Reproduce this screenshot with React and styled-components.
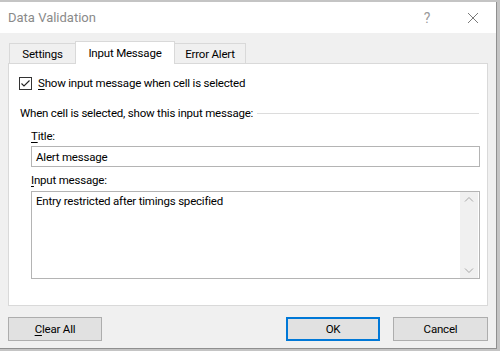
import React from 'react';
import styled, { createGlobalStyle } from 'styled-components';

const GlobalStyle = createGlobalStyle`
  html, body {
    margin: 0;
    padding: 0;
    background: #bdbdbd;
  }
  body {
    font-family: Roboto, "Noto Sans", sans-serif;
    font-size: 11.5px;
    letter-spacing: -0.2px;
    color: #000;
  }
`;

const Screen = styled.div`
  width: 500px;
  height: 351px;
  padding-top: 2px;
  box-sizing: border-box;
  overflow: hidden;
  background: #c4c4c4;
`;

const Dialog = styled.div`
  width: 497px;
  height: 347px;
  box-sizing: border-box;
  display: flex;
  flex-direction: column;
  background: #f0f0f0;
  border-right: 1px solid #8f8f8f;
  border-bottom: 1px solid #8f8f8f;
`;

const TitleBar = styled.div`
  height: 31px;
  flex: none;
  display: flex;
  align-items: center;
  padding-left: 8px;
  background: #fff;
  color: #8a8a8a;
  font-size: 13px;
  letter-spacing: 0;
`;

const TitleText = styled.div`
  flex: 1;
`;

const TitleButton = styled.div`
  width: 46px;
  height: 31px;
  display: flex;
  align-items: center;
  justify-content: center;
  color: #9a9a9a;
  font-size: 14px;
`;

const Body = styled.div`
  padding: 8px 8px 0 8px;
  display: flex;
  flex-direction: column;
`;

const Tabs = styled.div`
  display: flex;
  align-items: flex-end;
  height: 22px;
  padding-left: 1px;
`;

const Tab = styled.div`
  width: ${p => p.$w}px;
  box-sizing: border-box;
  height: ${p => (p.$active ? 23 : 20)}px;
  margin-bottom: ${p => (p.$active ? -1 : 0)}px;
  margin-left: ${p => (p.$active ? -1 : 0)}px;
  margin-right: ${p => (p.$active ? -1 : 0)}px;
  position: relative;
  z-index: ${p => (p.$active ? 2 : 1)};
  display: flex;
  align-items: ${p => (p.$active ? 'flex-start' : 'center')};
  padding-top: ${p => (p.$active ? 3 : 0)}px;
  justify-content: center;
  background: ${p => (p.$active ? '#fff' : '#f0f0f0')};
  border: 1px solid #d9d9d9;
  border-bottom: none;
  line-height: 16px;
`;

const Panel = styled.div`
  height: 243px;
  box-sizing: border-box;
  background: #fff;
  border: 1px solid #d9d9d9;
  padding: 11px 7px 0 10px;
  display: flex;
  flex-direction: column;
`;

const CheckRow = styled.label`
  display: flex;
  align-items: center;
  gap: 6px;
  height: 16px;
  line-height: 16px;
`;

const CheckBox = styled.span`
  width: 13px;
  height: 13px;
  box-sizing: border-box;
  border: 1px solid #333;
  background: #fff;
  display: flex;
  align-items: center;
  justify-content: center;
`;

const Key = styled.span`
  text-decoration: underline;
  text-underline-offset: 2px;
`;

const GroupHead = styled.div`
  margin-top: 14px;
  display: flex;
  align-items: center;
  gap: 4px;
  padding-left: 1px;
  line-height: 16px;

  &::after {
    content: '';
    flex: 1;
    height: 1px;
    background: #dcdcdc;
    margin-right: 1px;
  }
`;

const Fields = styled.div`
  padding-left: 12px;
  display: flex;
  flex-direction: column;
`;

const FieldLabel = styled.div`
  line-height: 16px;
  margin-top: ${p => p.$mt}px;
`;

const TextBox = styled.div`
  margin-top: 2px;
  height: 21px;
  box-sizing: border-box;
  border: 1px solid #b4b4b4;
  padding: 0 4px;
  display: flex;
  align-items: center;
  line-height: 16px;
`;

const MessageBox = styled.div`
  margin-top: 3px;
  height: 88px;
  box-sizing: border-box;
  border: 1px solid #b4b4b4;
  display: flex;
`;

const MessageText = styled.div`
  flex: 1;
  padding: 0 4px;
  line-height: 16px;
  padding-top: 1px;
`;

const ScrollBar = styled.div`
  width: 18px;
  margin: 0 1px 0 0;
  background: #f0f0f0;
  display: flex;
  flex-direction: column;
  justify-content: space-between;
  align-items: center;
  padding: 4px 0;
`;

const Footer = styled.div`
  margin-top: 11px;
  display: flex;
  align-items: center;
`;

const Button = styled.div`
  width: ${p => p.$w}px;
  height: 24px;
  box-sizing: border-box;
  display: flex;
  align-items: center;
  justify-content: center;
  background: #e1e1e1;
  border: 1px solid ${p => (p.$primary ? '#0078d7' : '#adadad')};
  box-shadow: ${p => (p.$primary ? 'inset 0 0 0 1px #0078d7' : 'none')};
  margin-left: ${p => p.$ml || 0}px;
  line-height: 16px;
`;

const Spacer = styled.div`
  flex: 1;
`;

const Chevron = ({ up }) => (
  <svg width="10" height="6" viewBox="0 0 10 6">
    <path
      d={up ? 'M1 5.5 L5 1.5 L9 5.5' : 'M1 0.5 L5 4.5 L9 0.5'}
      fill="none"
      stroke="#a6a6a6"
      strokeWidth="1"
    />
  </svg>
);

export default function App() {
  return (
    <Screen>
      <GlobalStyle />
      <Dialog>
        <TitleBar>
          <TitleText>Data Validation</TitleText>
          <TitleButton>?</TitleButton>
          <TitleButton>
            <svg width="12" height="12" viewBox="0 0 12 12">
              <path d="M1 1 L11 11 M11 1 L1 11" stroke="#7a7a7a" strokeWidth="1" />
            </svg>
          </TitleButton>
        </TitleBar>
        <Body>
          <Tabs>
            <Tab $w={67}>Settings</Tab>
            <Tab $w={100} $active>Input Message</Tab>
            <Tab $w={72}>Error Alert</Tab>
          </Tabs>
          <Panel>
            <CheckRow>
              <CheckBox>
                <svg width="11" height="11" viewBox="0 0 11 11">
                  <path d="M1.5 5.5 L4 8 L9.5 2.5" fill="none" stroke="#222" strokeWidth="1.1" />
                </svg>
              </CheckBox>
              <span><Key>S</Key>how input message when cell is selected</span>
            </CheckRow>
            <GroupHead>When cell is selected, show this input message:</GroupHead>
            <Fields>
              <FieldLabel $mt={7}><Key>T</Key>itle:</FieldLabel>
              <TextBox>Alert message</TextBox>
              <FieldLabel $mt={5}><Key>I</Key>nput message:</FieldLabel>
              <MessageBox>
                <MessageText>Entry restricted after timings specified</MessageText>
                <ScrollBar>
                  <Chevron up />
                  <Chevron />
                </ScrollBar>
              </MessageBox>
            </Fields>
          </Panel>
          <Footer>
            <Button $w={94}><Key>C</Key>lear All</Button>
            <Spacer />
            <Button $w={94} $primary>OK</Button>
            <Button $w={95} $ml={13}>Cancel</Button>
          </Footer>
        </Body>
      </Dialog>
    </Screen>
  );
}
